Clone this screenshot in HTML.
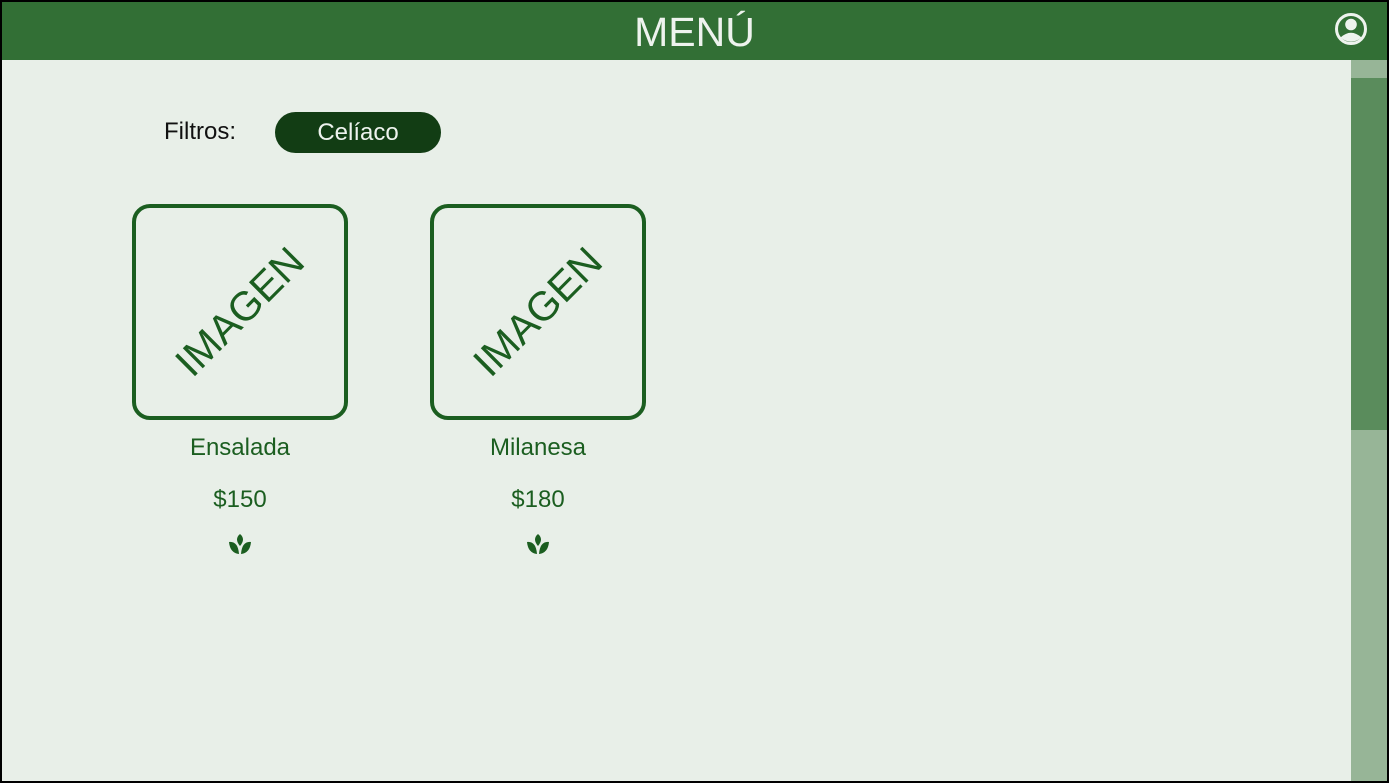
<!DOCTYPE html>
<html><head><style>
body{margin:0;width:1389px;height:783px;overflow:hidden;font-family:"Liberation Sans",Roboto,sans-serif;}
.frame{position:absolute;left:0;top:0;width:1385px;height:779px;border:2px solid #000;background:#e8efe8;overflow:hidden}
.hdr{position:absolute;left:0;top:0;width:1385px;height:58px;background:#326f35;color:#eef3ee;text-align:center;font-size:41px;line-height:60px}
.sb{position:absolute;left:1349px;top:58px;width:36px;height:721px;background:#97b597}
.th{position:absolute;left:1349px;top:76px;width:36px;height:352px;background:#5a8c5c}
.card{position:absolute;top:202px;width:208px;height:208px;border:4px solid #1b5e20;border-radius:18px}
.card span{position:absolute;left:50%;top:50%;transform:translate(-50%,-50%) rotate(-45deg);color:#1b5e20;font-size:41px;white-space:nowrap}
.t{position:absolute;width:216px;text-align:center;color:#1b5e20;font-size:24px}
</style></head><body><div class="frame">
<div class="hdr">MENÚ</div>
<svg style="position:absolute;left:1332px;top:10px" width="34" height="34" viewBox="0 0 34 34"><circle cx="17" cy="17" r="14.5" fill="none" stroke="#eef3ee" stroke-width="3"/><circle cx="17" cy="12.5" r="5.8" fill="#eef3ee"/><path d="M6.5 25.5 Q17 16 27.5 25.5 Q17 34 6.5 25.5Z" fill="#eef3ee"/></svg>
<div class="sb"></div><div class="th"></div>
<div style="position:absolute;left:162px;top:116px;font-size:24px;color:#111">Filtros:</div>
<div style="position:absolute;left:273px;top:110px;width:166px;height:41px;border-radius:21px;background:#123d14;color:#eef3ee;font-size:24px;text-align:center;line-height:41px">Celíaco</div>
<div class="card" style="left:130px"><span>IMAGEN</span></div>
<div class="card" style="left:428px"><span>IMAGEN</span></div>
<div class="t" style="left:130px;top:432px">Ensalada</div>
<div class="t" style="left:428px;top:432px">Milanesa</div>
<div class="t" style="left:130px;top:484px">$150</div>
<div class="t" style="left:428px;top:484px">$180</div>
<svg style="position:absolute;left:226px;top:531px" width="24" height="24" viewBox="0 0 24 24"><path d="M12 1 Q18 6 12 13 Q6 6 12 1Z M1 9 Q10 8 11 21 Q2 20 1 9Z M23 9 Q14 8 13 21 Q22 20 23 9Z" fill="#1b5e20"/></svg>
<svg style="position:absolute;left:524px;top:531px" width="24" height="24" viewBox="0 0 24 24"><path d="M12 1 Q18 6 12 13 Q6 6 12 1Z M1 9 Q10 8 11 21 Q2 20 1 9Z M23 9 Q14 8 13 21 Q22 20 23 9Z" fill="#1b5e20"/></svg>
</div></body></html>
